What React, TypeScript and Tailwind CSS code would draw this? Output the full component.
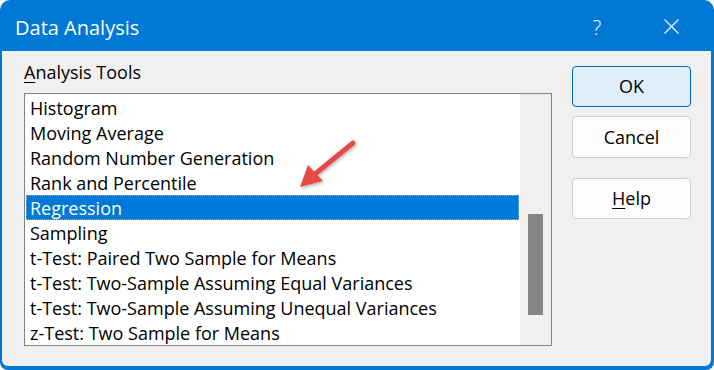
import React from 'react'

const tools = [
  'Histogram',
  'Moving Average',
  'Random Number Generation',
  'Rank and Percentile',
  'Regression',
  'Sampling',
  't-Test: Paired Two Sample for Means',
  't-Test: Two-Sample Assuming Equal Variances',
  't-Test: Two-Sample Assuming Unequal Variances',
  'z-Test: Two Sample for Means',
]

const font = { fontFamily: '"Segoe UI", "Open Sans", "Noto Sans", sans-serif' }

export default function App() {
  const selected = 'Regression'
  return (
    <div className="w-[714px] h-[370px] bg-white" style={font}>
      <div className="w-[714px] h-[370px] bg-[#0078d4] rounded-t-[10px] rounded-b-[8px] flex flex-col">
        {/* Title bar */}
        <div className="h-[51px] flex items-center pl-[15px] pt-[4px] text-white">
          <span className="text-[20px] leading-none flex-1">Data Analysis</span>
          <span className="text-[20px] leading-none font-light w-[12px] text-center mr-[61px]">?</span>
          <svg width="15" height="15" viewBox="0 0 15 15" className="mr-[35px] -mt-[3px]">
            <path d="M0.5 0.5 L14.5 14.5 M14.5 0.5 L0.5 14.5" stroke="white" strokeWidth="1.1" fill="none" />
          </svg>
        </div>

        {/* Body */}
        <div className="flex-1 ml-[2px] mr-[3px] mb-[4px] bg-[#f0f0f0] rounded-b-[6px] flex pl-[22px] pt-[10px]">
          <div className="flex flex-col w-[528px]">
            <div className="text-[18px] leading-[22px] text-black">
              <span className="underline underline-offset-[3px]">A</span>nalysis Tools
            </div>
            <div className="mt-[10px] h-[253px] border border-[#828282] bg-white flex relative">
              <div className="flex-1 p-[1px]">
                {tools.map(t => (
                  <div
                    key={t}
                    className={
                      t === selected
                        ? 'h-[25px] leading-[24px] pt-[1px] pl-[4px] text-[18px] text-white bg-[#0078d7] outline-1 outline-dotted outline-[#7fb8ea] -outline-offset-1 whitespace-nowrap'
                        : 'h-[25px] leading-[24px] pt-[1px] pl-[4px] text-[18px] text-black whitespace-nowrap'
                    }
                  >
                    {t}
                  </div>
                ))}
              </div>
              <div className="w-[31px] bg-[#f0f0f0] flex justify-center pt-[120px]">
                <div className="w-[15px] h-[101px] bg-[#858585]" />
              </div>
              {/* annotation arrow */}
              <svg
                className="absolute left-[270px] top-[40px]"
                width="70"
                height="60"
                viewBox="0 0 70 60"
              >
                <defs>
                  <filter id="sh" x="-20%" y="-20%" width="140%" height="140%">
                    <feDropShadow dx="1" dy="2" stdDeviation="1.5" floodColor="#000" floodOpacity="0.25" />
                  </filter>
                </defs>
                <g filter="url(#sh)">
                  <path d="M58 9 L20 40" stroke="#e84848" strokeWidth="5" strokeLinecap="round" fill="none" />
                  <path d="M5 53 L13 31 L28 47 Z" fill="#e84848" />
                </g>
              </svg>
            </div>
          </div>

          <div className="ml-[20px] pt-[5px] flex flex-col w-[119px]">
            <button className="h-[41px] rounded-[4px] border border-[#0067c0] bg-[#e0eef9] text-[18px] text-black">
              OK
            </button>
            <button className="mt-[9px] h-[42px] rounded-[4px] border border-[#d0d0d0] bg-[#fdfdfd] text-[18px] text-black">
              Cancel
            </button>
            <button className="mt-[20px] h-[41px] rounded-[4px] border border-[#d0d0d0] bg-[#fdfdfd] text-[18px] text-black">
              <span className="underline underline-offset-[3px]">H</span>elp
            </button>
          </div>
        </div>
      </div>
    </div>
  )
}
